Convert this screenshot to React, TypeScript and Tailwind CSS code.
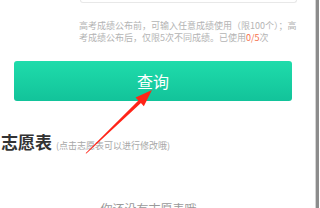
import React from "react";

export default function App() {
  return (
    <div
      className="relative w-[320px] h-[208px] overflow-hidden bg-white flex items-start"
      style={{ fontFamily: '"Noto Sans CJK SC", "Noto Sans", sans-serif' }}
    >
      <div className="w-[315px] flex flex-col">
        <div className="ml-[80px] w-[217px] h-[3px] rounded-b-[3px] border-x border-b border-[#e8e8e8] bg-white" />
        <div className="pl-[79px] pt-[16.5px] text-[9px] leading-[12px] text-[#b4b4b4] whitespace-nowrap">
          <div>高考成绩公布前，可输入任意成绩使用（限100个）；高</div>
          <div>
            考成绩公布后，仅限5次不同成绩。已使用<span className="text-[#f6704c]">0/5</span>次
          </div>
        </div>
        <button className="mt-[17.5px] ml-[14px] w-[278px] h-[40px] rounded-[3px] bg-gradient-to-b from-[#1fdcab] to-[#12c39a] text-white text-[16px] flex items-center justify-center">
          查询
        </button>
        <div className="mt-[28.5px] flex items-baseline h-[24px]">
          <span className="ml-[1px] text-[17px] leading-[24px] font-bold text-[#333333]">志愿表</span>
          <span className="ml-[4px] text-[9px] text-[#a8a8a8]">(点击志愿表可以进行修改哦)</span>
        </div>
        <div className="mt-[45px] text-center text-[12px] leading-[20px] text-[#9a9a9a] pr-[18px]">
          你还没有志愿表哦
        </div>
      </div>
      <div className="w-[1px] h-[208px] bg-[#d4d4d4]" />
      <div className="w-[3px] h-[208px] bg-[#8c8c8c]" />
      <div className="w-[1px] h-[208px] bg-white" />
      <svg className="absolute left-0 top-0" width="320" height="208" viewBox="0 0 320 208">
        <polygon
          points="85.6,153.2 138.45,100.5 135.55,97.45 152,90 143.85,106.15 140.95,103.1 86.4,153.6"
          fill="#ff2418"
        />
      </svg>
    </div>
  );
}
